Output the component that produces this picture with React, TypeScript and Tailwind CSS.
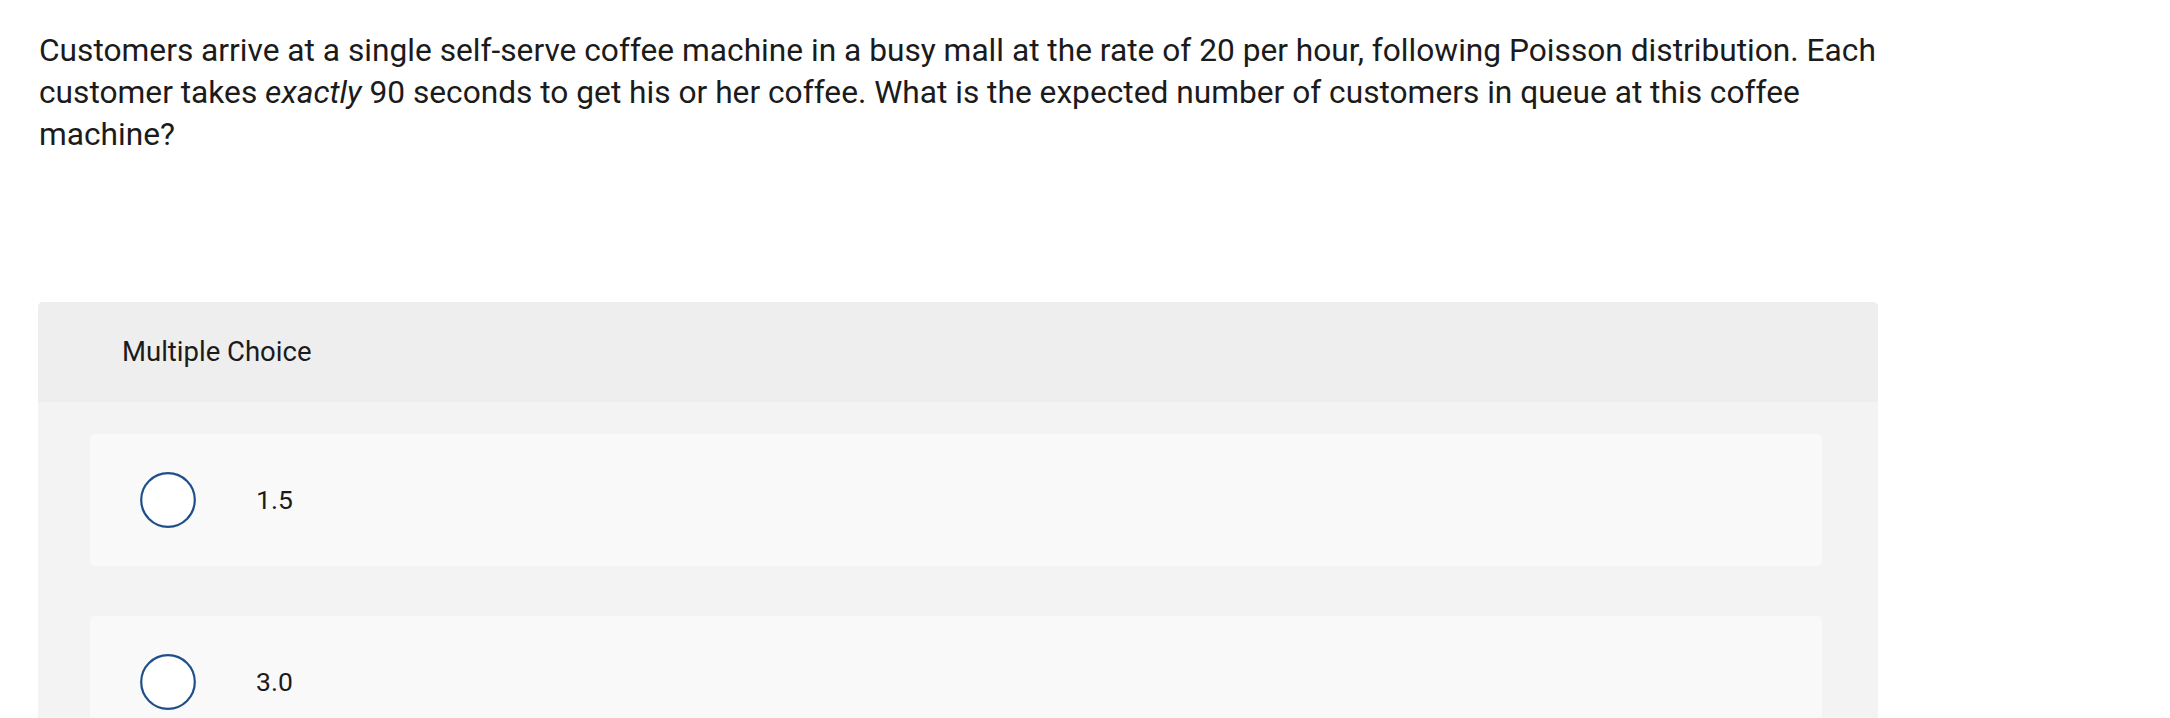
import React from "react";

const font = { fontFamily: "Roboto, 'Liberation Sans', sans-serif" };

function Radio() {
  return (
    <svg width="56" height="56" viewBox="0 0 56 56" className="shrink-0">
      <circle cx="28" cy="28" r="26.8" fill="#ffffff" stroke="#1f4f8b" strokeWidth="2.2" />
    </svg>
  );
}

function Option({ label }: { label: string }) {
  return (
    <div className="ml-[52px] w-[1732px] h-[132px] rounded-[5px] bg-[#f9f9f9] flex items-center pl-[50px]">
      <Radio />
      <span className="ml-[60px] text-[26.5px] text-[#1b1b1b] leading-none">{label}</span>
    </div>
  );
}

export default function App() {
  return (
    <div className="bg-white min-h-[718px] text-[#1b1b1b]" style={font}>
      <div className="pl-[39px] pt-[30px]">
        <p className="w-[1860px] text-[31.7px] leading-[42px]">
          Customers arrive at a single self-serve coffee machine in a busy mall at the rate of 20 per hour, following Poisson distribution. Each customer takes <em>exactly</em> 90 seconds to get his or her coffee. What is the expected number of customers in queue at this coffee machine?
        </p>
      </div>
      <div className="ml-[38px] mt-[146px] w-[1840px] rounded-t-[5px] bg-[#f3f3f3] pb-[40px]">
        <div className="h-[100px] bg-[#eeeeee] rounded-t-[5px] flex items-center pl-[84px]">
          <span className="text-[27.5px] leading-none">Multiple Choice</span>
        </div>
        <div className="pt-[32px] flex flex-col gap-[50px]">
          <Option label="1.5" />
          <Option label="3.0" />
        </div>
      </div>
    </div>
  );
}
